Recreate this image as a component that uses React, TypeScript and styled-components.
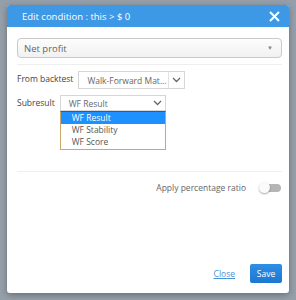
import React from "react";
import styled, { createGlobalStyle } from "styled-components";

const GlobalStyle = createGlobalStyle`
  html, body {
    margin: 0;
    padding: 0;
    background: #959fa9;
    font-family: "Open Sans", "Liberation Sans", sans-serif;
  }
`;

const options = ["WF Result", "WF Stability", "WF Score"];

function Chevron() {
  return (
    <svg width="9" height="6" viewBox="0 0 9 6">
      <path d="M1 1l3.5 3.5L8 1" fill="none" stroke="#666" strokeWidth="1.3" />
    </svg>
  );
}

function App() {
  return (
    <>
      <GlobalStyle />
      <Page>
        <Dialog>
          <Header>
            <Title>Edit condition : this &gt; $ 0</Title>
            <CloseX>
              <svg width="11" height="11" viewBox="0 0 11 11">
                <path d="M1 1l9 9M10 1l-9 9" stroke="#fff" strokeWidth="2" />
              </svg>
            </CloseX>
          </Header>
          <Body>
            <MainSelect>
              <span>Net profit</span>
              <Caret>▼</Caret>
            </MainSelect>
            <Divider />
            <Row>
              <Label>From backtest</Label>
              <SmallSelect $width={107}>
                <SelectText>Walk-Forward Mat...</SelectText>
                <ChevronBox $bordered>
                  <Chevron />
                </ChevronBox>
              </SmallSelect>
            </Row>
            <Row $gap={6}>
              <Label>Subresult</Label>
              <Combo>
                <SmallSelect $width={106} $height={16}>
                  <SelectText>WF Result</SelectText>
                  <ChevronBox>
                    <Chevron />
                  </ChevronBox>
                </SmallSelect>
                <List>
                  {options.map((o, i) => (
                    <Option key={o} $active={i === 0}>
                      {o}
                    </Option>
                  ))}
                </List>
              </Combo>
            </Row>
            <Divider $top={21} />
            <ToggleRow>
              <ToggleLabel>Apply percentage ratio</ToggleLabel>
              <Toggle>
                <Knob />
              </Toggle>
            </ToggleRow>
          </Body>
          <Footer>
            <CloseLink>Close</CloseLink>
            <SaveButton>Save</SaveButton>
          </Footer>
        </Dialog>
      </Page>
    </>
  );
}

export default App;

const Page = styled.div`
  padding: 5px 7px 7px 7px;
  height: 300px;
  box-sizing: border-box;
`;

const Dialog = styled.div`
  width: 282px;
  height: 288px;
  background: #fff;
  border-radius: 3px;
  box-shadow: 0 2px 6px rgba(0, 0, 0, 0.3);
  display: flex;
  flex-direction: column;
  overflow: hidden;
`;

const Header = styled.div`
  height: 22px;
  background: #3d98e6;
  display: flex;
  align-items: center;
  justify-content: space-between;
  padding: 0 9px 0 15px;
  flex-shrink: 0;
`;

const Title = styled.div`
  color: #fff;
  font-size: 9.5px;
`;

const CloseX = styled.div`
  display: flex;
  align-items: center;
`;

const Body = styled.div`
  padding: 11px 7px 0 10px;
  display: flex;
  flex-direction: column;
  flex: 1;
`;

const MainSelect = styled.div`
  height: 18px;
  border: 1px solid #c9c9c9;
  border-radius: 4px;
  background: linear-gradient(#fdfdfd, #f1f1f1);
  display: flex;
  align-items: center;
  justify-content: space-between;
  padding: 0 8px 0 6px;
  font-size: 9.5px;
  color: #666;
`;

const Caret = styled.span`
  font-size: 6px;
  color: #888;
`;

const Divider = styled.div<{ $top?: number }>`
  height: 1px;
  background: #eeeeee;
  margin-top: ${(p) => p.$top ?? 6}px;
`;

const Row = styled.div<{ $gap?: number }>`
  display: flex;
  align-items: flex-start;
  gap: 5px;
  margin-top: ${(p) => p.$gap ?? 6}px;
`;

const Label = styled.div`
  font-size: 8.5px;
  color: #444;
  white-space: nowrap;
  padding-top: 2px;
`;

const SmallSelect = styled.div<{ $width: number; $height?: number }>`
  width: ${(p) => p.$width}px;
  height: ${(p) => p.$height ?? 18}px;
  box-sizing: border-box;
  border: 1px solid #d6d6d6;
  display: flex;
  align-items: center;
  background: #fff;
`;

const SelectText = styled.span`
  flex: 1;
  font-size: 8.5px;
  color: #666;
  padding-left: 8px;
  white-space: nowrap;
`;

const ChevronBox = styled.span<{ $bordered?: boolean }>`
  width: 15px;
  height: 100%;
  display: flex;
  align-items: center;
  justify-content: center;
  border-left: ${(p) => (p.$bordered ? "1px solid #e2e2e2" : "none")};
`;

const Combo = styled.div`
  display: flex;
  flex-direction: column;
`;

const List = styled.div`
  width: 106px;
  box-sizing: border-box;
  border: 1px solid #c9a86a;
  border-top-color: #555;
  padding-bottom: 1px;
`;

const Option = styled.div<{ $active?: boolean }>`
  height: 12px;
  line-height: 12px;
  font-size: 8.5px;
  padding-left: 11px;
  color: ${(p) => (p.$active ? "#fff" : "#555")};
  background: ${(p) => (p.$active ? "#1e90ff" : "#fff")};
`;

const ToggleRow = styled.div`
  display: flex;
  align-items: center;
  justify-content: flex-end;
  margin-top: 10px;
  padding-right: 1px;
`;

const ToggleLabel = styled.div`
  font-size: 8.5px;
  color: #666;
  margin-right: 14px;
`;

const Toggle = styled.div`
  width: 21px;
  height: 8px;
  border-radius: 4px;
  background: #b5b5b5;
  display: flex;
  align-items: center;
`;

const Knob = styled.div`
  width: 11px;
  height: 11px;
  border-radius: 50%;
  background: #fafafa;
  box-shadow: 0 1px 2px rgba(0, 0, 0, 0.35);
  margin-left: -1px;
`;

const Footer = styled.div`
  display: flex;
  align-items: center;
  justify-content: flex-end;
  gap: 15px;
  padding: 0 7px 10px 0;
`;

const CloseLink = styled.a`
  font-size: 8.5px;
  color: #4a90d9;
  text-decoration: underline;
`;

const SaveButton = styled.button`
  width: 32px;
  height: 19px;
  border: none;
  border-radius: 2px;
  background: linear-gradient(#2f8ee5, #1d77d2);
  color: #fff;
  font-family: "Open Sans", "Liberation Sans", sans-serif;
  font-size: 8.5px;
  padding: 0;
`;
